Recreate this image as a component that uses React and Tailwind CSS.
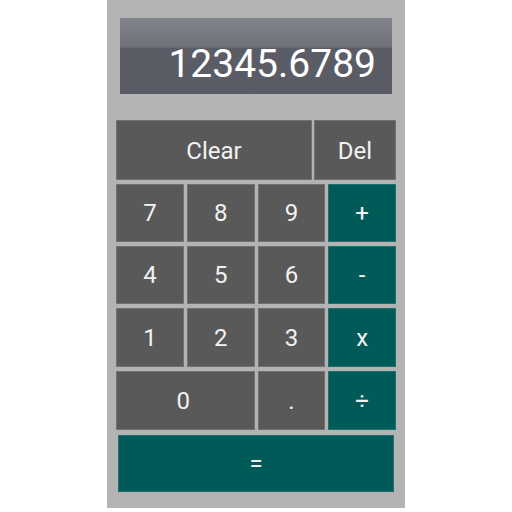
export default function App() {
    const gray = "bg-[#595959] border border-[#727272] text-[#f2f2f2] flex items-center justify-center";
    const teal = "bg-[#005a58] border border-[#1f706e] text-[#f2f2f2] flex items-center justify-center";

    return (
        <div className="w-[512px] h-[512px] bg-white flex justify-center" style={{ fontFamily: "Roboto, 'Liberation Sans', sans-serif" }}>
            <div className="w-[298px] h-[508px] bg-[#b3b3b3] flex flex-col px-[9px]">
                <div className="mx-[4px] mt-[18px] h-[76px] bg-[linear-gradient(to_bottom,#82858c_0%,#6d7077_38%,#5a5d65_40%,#595c64_100%)] flex items-end justify-end pr-[16px] pb-[5px]">
                    <span className="text-[39px] leading-[50px] text-white">12345.6789</span>
                </div>

                <div className="mt-[26px] flex gap-[2px] h-[60px] text-[24px]">
                    <button className={`${gray} w-[196px] pt-[2px]`}>Clear</button>
                    <button className={`${gray} flex-1 pt-[2px]`}>Del</button>
                </div>

                <div className="mt-[4px] grid grid-cols-4 gap-x-[3px] gap-y-[4px] grid-rows-[58px_58px_59px_59px] text-[24px]">
                    <button className={gray}>7</button>
                    <button className={gray}>8</button>
                    <button className={gray}>9</button>
                    <button className={teal}>+</button>
                    <button className={gray}>4</button>
                    <button className={gray}>5</button>
                    <button className={gray}>6</button>
                    <button className={teal}>-</button>
                    <button className={gray}>1</button>
                    <button className={gray}>2</button>
                    <button className={gray}>3</button>
                    <button className={teal}>x</button>
                    <button className={`${gray} col-span-2 pr-[4px]`}>0</button>
                    <button className={gray}>.</button>
                    <button className={teal}>÷</button>
                </div>

                <button className={`${teal} mt-[5px] mx-[2px] h-[57px] text-[24px]`}>=</button>
            </div>
        </div>
    );
}
